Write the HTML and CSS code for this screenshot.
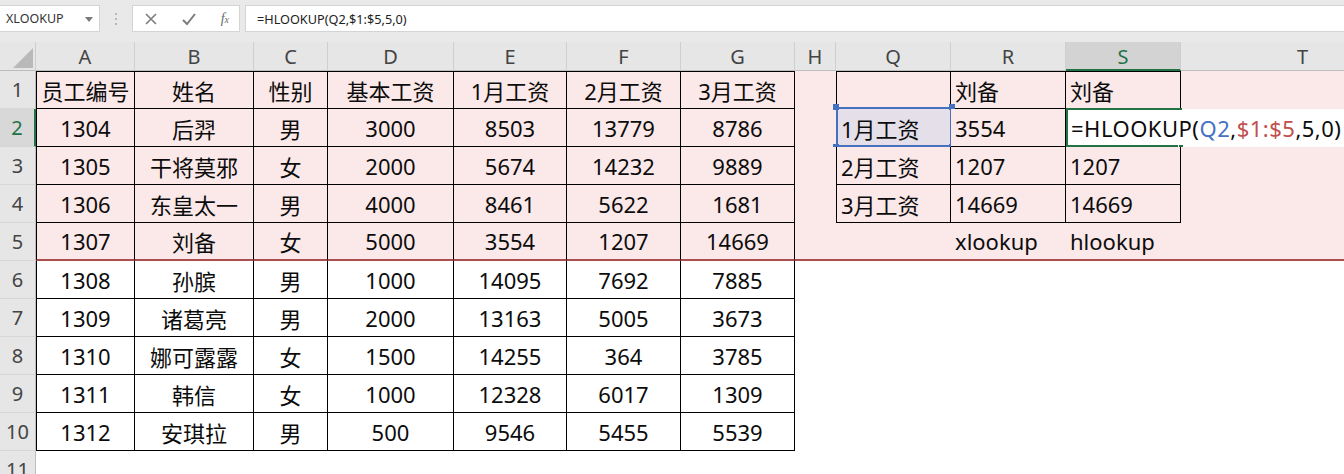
FILE: index.html
```html
<!DOCTYPE html>
<html lang="zh-CN">
<head>
<meta charset="utf-8">
<title>HLOOKUP</title>
<link rel="stylesheet" href="styles.css">
</head>
<body>
<div class="app">
  <div class="toolbar">
    <div class="namebox">
      <span class="nb-text">XLOOKUP</span>
      <svg class="nb-arrow" width="8" height="5" viewBox="0 0 8 5"><polygon points="0,0 8,0 4,5" fill="#7a7a7a"/></svg>
    </div>
    <div class="sep">
      <span class="dot"></span><span class="dot"></span><span class="dot"></span>
    </div>
    <div class="fbtns">
      <svg class="ico" width="14" height="14" viewBox="0 0 14 14"><path d="M2 2 L12 12 M12 2 L2 12" stroke="#7c7c7c" stroke-width="1.6" fill="none"/></svg>
      <svg class="ico" width="16" height="14" viewBox="0 0 16 14"><path d="M2 8 L6 12 L14 2" stroke="#7c7c7c" stroke-width="2" fill="none"/></svg>
      <span class="fx">f<span class="fx-x">x</span></span>
    </div>
    <div class="formula">=HLOOKUP(Q2,$1:$5,5,0)</div>
  </div>

  <div class="sheet">
    <!-- header row -->
    <div class="corner"><svg width="36" height="29" viewBox="0 0 36 29"><polygon points="33,6 33,26 13,26" fill="#b9b9b9"/></svg></div>
    <div class="ch">A</div><div class="ch">B</div><div class="ch">C</div><div class="ch">D</div><div class="ch">E</div><div class="ch">F</div><div class="ch">G</div><div class="ch">H</div><div class="ch">Q</div><div class="ch">R</div><div class="ch sel-col">S</div><div class="ch">T</div>

    <!-- row 1 -->
    <div class="rh">1</div>
    <div class="c pk bd bl bt ctr">员工编号</div>
    <div class="c pk bd bt ctr">姓名</div>
    <div class="c pk bd bt ctr">性别</div>
    <div class="c pk bd bt ctr">基本工资</div>
    <div class="c pk bd bt ctr">1月工资</div>
    <div class="c pk bd bt ctr">2月工资</div>
    <div class="c pk bd bt ctr">3月工资</div>
    <div class="c pk"></div>
    <div class="c pk bd bl bt l"></div>
    <div class="c pk bd bt l">刘备</div>
    <div class="c pk bd bt l">刘备</div>
    <div class="c pk"></div>

    <!-- row 2 -->
    <div class="rh sel-row">2</div>
    <div class="c pk bd bl ctr">1304</div>
    <div class="c pk bd ctr">后羿</div>
    <div class="c pk bd ctr">男</div>
    <div class="c pk bd ctr">3000</div>
    <div class="c pk bd ctr">8503</div>
    <div class="c pk bd ctr">13779</div>
    <div class="c pk bd ctr">8786</div>
    <div class="c pk"></div>
    <div class="c ref bd bl l">1月工资<span class="h h1"></span><span class="h h2"></span><span class="h h3"></span><span class="h h4"></span></div>
    <div class="c pk bd l">3554</div>
    <div class="c edit l">=HLOOKUP(<span class="f-blue">Q2</span>,<span class="f-red">$1:$5</span>,5,0)<span class="edit-box"></span><span class="fill-h"></span></div>

    <!-- row 3 -->
    <div class="rh">3</div>
    <div class="c pk bd bl ctr">1305</div>
    <div class="c pk bd ctr">干将莫邪</div>
    <div class="c pk bd ctr">女</div>
    <div class="c pk bd ctr">2000</div>
    <div class="c pk bd ctr">5674</div>
    <div class="c pk bd ctr">14232</div>
    <div class="c pk bd ctr">9889</div>
    <div class="c pk"></div>
    <div class="c pk bd bl l">2月工资</div>
    <div class="c pk bd l">1207</div>
    <div class="c pk bd l">1207</div>
    <div class="c pk"></div>

    <!-- row 4 -->
    <div class="rh">4</div>
    <div class="c pk bd bl ctr">1306</div>
    <div class="c pk bd ctr">东皇太一</div>
    <div class="c pk bd ctr">男</div>
    <div class="c pk bd ctr">4000</div>
    <div class="c pk bd ctr">8461</div>
    <div class="c pk bd ctr">5622</div>
    <div class="c pk bd ctr">1681</div>
    <div class="c pk"></div>
    <div class="c pk bd bl l">3月工资</div>
    <div class="c pk bd l">14669</div>
    <div class="c pk bd l">14669</div>
    <div class="c pk"></div>

    <!-- row 5 -->
    <div class="rh">5</div>
    <div class="c pk bd bl rb ctr">1307</div>
    <div class="c pk bd rb ctr">刘备</div>
    <div class="c pk bd rb ctr">女</div>
    <div class="c pk bd rb ctr">5000</div>
    <div class="c pk bd rb ctr">3554</div>
    <div class="c pk bd rb ctr">1207</div>
    <div class="c pk bd rb ctr">14669</div>
    <div class="c pk rb"></div>
    <div class="c pk rb"></div>
    <div class="c pk rb l">xlookup</div>
    <div class="c pk rb l">hlookup</div>
    <div class="c pk rb"></div>

    <!-- row 6 -->
    <div class="rh">6</div>
    <div class="c bd bl ctr">1308</div>
    <div class="c bd ctr">孙膑</div>
    <div class="c bd ctr">男</div>
    <div class="c bd ctr">1000</div>
    <div class="c bd ctr">14095</div>
    <div class="c bd ctr">7692</div>
    <div class="c bd ctr">7885</div>
    <div class="c"></div><div class="c"></div><div class="c"></div><div class="c"></div><div class="c"></div>

    <!-- row 7 -->
    <div class="rh">7</div>
    <div class="c bd bl ctr">1309</div>
    <div class="c bd ctr">诸葛亮</div>
    <div class="c bd ctr">男</div>
    <div class="c bd ctr">2000</div>
    <div class="c bd ctr">13163</div>
    <div class="c bd ctr">5005</div>
    <div class="c bd ctr">3673</div>
    <div class="c"></div><div class="c"></div><div class="c"></div><div class="c"></div><div class="c"></div>

    <!-- row 8 -->
    <div class="rh">8</div>
    <div class="c bd bl ctr">1310</div>
    <div class="c bd ctr">娜可露露</div>
    <div class="c bd ctr">女</div>
    <div class="c bd ctr">1500</div>
    <div class="c bd ctr">14255</div>
    <div class="c bd ctr">364</div>
    <div class="c bd ctr">3785</div>
    <div class="c"></div><div class="c"></div><div class="c"></div><div class="c"></div><div class="c"></div>

    <!-- row 9 -->
    <div class="rh">9</div>
    <div class="c bd bl ctr">1311</div>
    <div class="c bd ctr">韩信</div>
    <div class="c bd ctr">女</div>
    <div class="c bd ctr">1000</div>
    <div class="c bd ctr">12328</div>
    <div class="c bd ctr">6017</div>
    <div class="c bd ctr">1309</div>
    <div class="c"></div><div class="c"></div><div class="c"></div><div class="c"></div><div class="c"></div>

    <!-- row 10 -->
    <div class="rh">10</div>
    <div class="c bd bl ctr">1312</div>
    <div class="c bd ctr">安琪拉</div>
    <div class="c bd ctr">男</div>
    <div class="c bd ctr">500</div>
    <div class="c bd ctr">9546</div>
    <div class="c bd ctr">5455</div>
    <div class="c bd ctr">5539</div>
    <div class="c"></div><div class="c"></div><div class="c"></div><div class="c"></div><div class="c"></div>

    <!-- row 11 -->
    <div class="rh">11</div>
    <div class="c"></div><div class="c"></div><div class="c"></div><div class="c"></div><div class="c"></div><div class="c"></div><div class="c"></div><div class="c"></div><div class="c"></div><div class="c"></div><div class="c"></div><div class="c"></div>
  </div>
</div>
</body>
</html>
```

FILE: styles.css
```css
* { box-sizing: border-box; }
html, body {
  margin: 0;
  padding: 0;
  width: 1344px;
  height: 474px;
  overflow: hidden;
  background: #ffffff;
}
.app {
  width: 1344px;
  height: 474px;
  overflow: hidden;
  font-family: "Noto Sans", "Noto Sans CJK SC", sans-serif;
  color: #111;
}

/* ---------- toolbar ---------- */
.toolbar {
  height: 42px;
  background: #e9e9e9;
  display: flex;
  align-items: flex-start;
  padding-top: 5px;
}
.namebox {
  width: 100px;
  height: 27px;
  background: #fff;
  border: 1px solid #d4d4d4;
  border-left: none;
  display: flex;
  align-items: center;
  justify-content: space-between;
  padding: 0 6px 0 6px;
}
.nb-text {
  font-size: 12.5px;
  color: #333;
}
.nb-arrow { margin-top: 1px; }
.sep {
  width: 32px;
  height: 27px;
  display: flex;
  flex-direction: column;
  align-items: center;
  justify-content: center;
  gap: 3px;
}
.dot {
  width: 2px;
  height: 2px;
  background: #a8a8a8;
  border-radius: 1px;
}
.fbtns {
  width: 108px;
  height: 27px;
  background: #fff;
  border: 1px solid #d4d4d4;
  display: flex;
  align-items: center;
  justify-content: space-between;
  padding: 0 10px 0 11px;
}
.fx {
  font-family: "Liberation Serif", serif;
  font-style: italic;
  font-size: 14px;
  color: #6a6a6a;
}
.fx-x { font-size: 10px; }
.formula {
  margin-left: 5px;
  flex: 1;
  height: 27px;
  background: #fff;
  border: 1px solid #d4d4d4;
  border-right: none;
  display: flex;
  align-items: center;
  padding-left: 11px;
  font-size: 12.7px;
  color: #222;
}

/* ---------- sheet grid ---------- */
.sheet {
  display: grid;
  grid-template-columns: 36px 99px 119px 74px 126px 113px 114px 114px 41px 115px 115px 115px 244px;
  grid-template-rows: 29px repeat(11, 38px);
  width: 1425px;
}
.corner {
  background: #e6e6e6;
  border-right: 1px solid #cfcfcf;
  border-bottom: 1px solid #bdbdbd;
}
.corner svg { display: block; }
.ch {
  background: #e6e6e6;
  border-right: 1px solid #cfcfcf;
  border-bottom: 1px solid #bdbdbd;
  display: flex;
  align-items: center;
  justify-content: center;
  font-size: 20px;
  color: #444;
  padding-top: 1px;
}
.ch.sel-col {
  background: #d3d3d3;
  color: #217346;
  border-bottom: 2px solid #217346;
}
.rh {
  background: #e6e6e6;
  border-right: 1px solid #bdbdbd;
  border-bottom: 1px solid #d6d6d6;
  display: flex;
  align-items: center;
  justify-content: center;
  font-size: 20px;
  color: #444;
}
.rh.sel-row {
  background: #d8d8d8;
  color: #217346;
  border-right: 2px solid #217346;
}

.c {
  display: flex;
  align-items: center;
  font-size: 22px;
  white-space: nowrap;
  position: relative;
  background: #fff;
  color: #0c0c0c;
}
.ctr { justify-content: center; }
.l { justify-content: flex-start; padding-left: 4px; }
.pk { background: #fbe8e8; }
.bd {
  border-right: 1px solid #000;
  border-bottom: 1px solid #000;
}
.bl { border-left: 1px solid #000; }
.bt { border-top: 1px solid #000; }
.rb { border-bottom: 2px solid #a94f4f; }

/* referenced cell Q2 */
.ref {
  background: #e5dfe9;
}
.ref::before {
  content: "";
  position: absolute;
  left: -1px;
  top: -2px;
  right: -2px;
  bottom: -1px;
  border: 2px solid #4670c0;
  pointer-events: none;
}
.h {
  position: absolute;
  width: 6px;
  height: 6px;
  background: #4670c0;
}
.h1 { left: -4px; top: -5px; }
.h2 { right: -5px; top: -5px; }
.h3 { left: -4px; bottom: -4px; }
.h4 { right: -5px; bottom: -4px; }

/* editing cell S2 (spills over T2) */
.edit {
  grid-column: span 2;
  background: #fff;
  padding-left: 5px;
  overflow: visible;
  letter-spacing: 0.5px;
}
.edit-box {
  position: absolute;
  left: 0;
  top: -1px;
  width: 116px;
  bottom: 0;
  border: 2px solid #217346;
  border-right: none;
  pointer-events: none;
}
.fill-h {
  position: absolute;
  left: 112px;
  bottom: -3px;
  width: 6px;
  height: 6px;
  background: #217346;
  border: 1px solid #fff;
}
.f-blue { color: #4472c4; }
.f-red { color: #c0504d; }
```
